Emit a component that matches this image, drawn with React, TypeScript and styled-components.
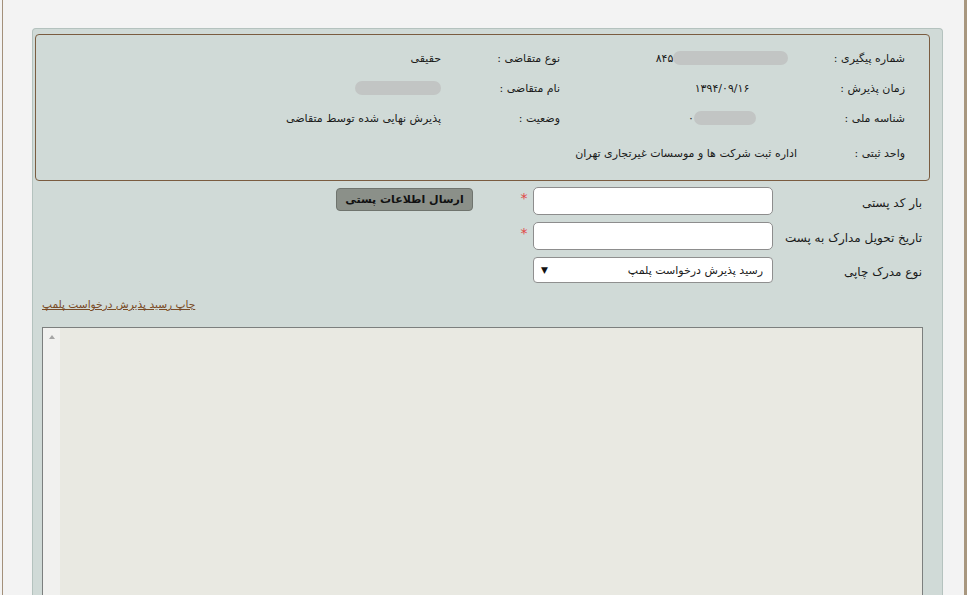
import * as React from "react"
import styled, { createGlobalStyle } from "styled-components"

const GlobalStyle = createGlobalStyle`
  html, body {
    margin: 0;
    padding: 0;
    height: 100%;
    overflow: hidden;
    background: #f3f3f3;
  }
  body {
    font-family: "DejaVu Sans", "Noto Sans", sans-serif;
    color: #1a1a1a;
  }
`

const Page = styled.div`
  box-sizing: border-box;
  height: 100vh;
  margin-left: 2px;
  border-left: 1px solid #a3907a;
  border-right: 3px solid #a8977f;
  padding: 28px 21px 0 29px;
  display: flex;
  flex-direction: column;
`

const Panel = styled.div`
  flex: 1;
  display: flex;
  flex-direction: column;
  direction: rtl;
  background: #d0dad7;
  border: 1px solid #b4c2be;
  border-bottom: none;
  border-radius: 4px 4px 0 0;
  padding: 5px 12px 0 2px;
  min-height: 0;
`

const InfoBox = styled.div`
  box-sizing: border-box;
  height: 147px;
  border: 1px solid #7a5c40;
  border-radius: 4px;
  padding: 8px 24px 0 0;
  display: grid;
  grid-template-columns: 108px 150px 87px 119px 1fr;
  grid-template-rows: 30px 30px 30px 40px;
`

const InfoLabel = styled.div`
  display: flex;
  align-items: center;
  justify-content: flex-start;
  font-size: 11px;
  white-space: nowrap;
`

const InfoValue = styled.div<{ $center?: boolean; $wide?: boolean }>`
  display: flex;
  align-items: center;
  justify-content: ${p => (p.$center ? "center" : "flex-start")};
  font-size: 11px;
  white-space: nowrap;
  ${p => (p.$wide ? "grid-column: 2 / -1;" : "")}
`

const Ltr = styled.span`
  display: inline-flex;
  align-items: center;
  direction: ltr;
`

const Blur = styled.span<{ $w: number }>`
  display: inline-block;
  width: ${p => p.$w}px;
  height: 14px;
  border-radius: 7px;
  background: #c2c5c4;
  filter: blur(0.6px);
`

const FormGrid = styled.div`
  margin-top: 6px;
  padding-right: 8px;
  display: grid;
  grid-template-columns: 149px 240px 18px 42px 137px 1fr;
  grid-template-rows: 28px 28px 26px;
  row-gap: 7px;
`

const FieldLabel = styled.label`
  grid-column: 1;
  display: flex;
  align-items: center;
  padding-top: 3px;
  font-size: 12px;
  white-space: nowrap;
`

const TextInput = styled.input`
  grid-column: 2;
  box-sizing: border-box;
  height: 28px;
  width: 100%;
  margin: 0;
  border: 1px solid #8d8d8d;
  border-radius: 5px;
  background: #fff;
`

const Star = styled.span`
  grid-column: 3;
  color: #e04545;
  font-size: 14px;
  line-height: 14px;
  margin-top: 4px;
  text-align: center;
`

const SendButton = styled.button`
  grid-column: 5;
  grid-row: 1;
  align-self: start;
  margin-top: 1px;
  height: 23px;
  padding: 0;
  background: #8b9089;
  border: 1px solid #6f746e;
  border-radius: 4px;
  color: #111;
  font-family: inherit;
  font-weight: bold;
  font-size: 11px;
`

const SelectBox = styled.div`
  grid-column: 2;
  box-sizing: border-box;
  display: flex;
  align-items: center;
  justify-content: space-between;
  padding: 0 9px 0 7px;
  border: 1px solid #8f8f8f;
  border-radius: 4px;
  background: #fff;
  font-size: 11px;
`

const Caret = styled.span`
  font-size: 9px;
  color: #111;
`

const LinkRow = styled.div`
  display: flex;
  justify-content: flex-end;
  padding-left: 7px;
  margin-top: 13px;
`

const PrintLink = styled.a`
  font-size: 10.6px;
  line-height: 16px;
  color: #7a4b26;
  text-decoration: underline;
`

const TextArea = styled.div`
  flex: 1;
  margin: 15px 7px 0 7px;
  display: flex;
  direction: ltr;
  border: 1px solid #7c7f7e;
  border-bottom: none;
  background: #e9e9e2;
`

const ScrollTrack = styled.div`
  width: 17px;
  background: #f1f1ef;
  display: flex;
  justify-content: center;
  padding-top: 7px;
`

const UpArrow = styled.span`
  width: 0;
  height: 0;
  border-left: 3.5px solid transparent;
  border-right: 3.5px solid transparent;
  border-bottom: 4px solid #a5a5a5;
`

const App = () => (
  <>
    <GlobalStyle />
    <Page>
      <Panel>
        <InfoBox>
          <InfoLabel>شماره پیگیری :</InfoLabel>
          <InfoValue $center>
            <Ltr>۸۴۵<Blur $w={115} /></Ltr>
          </InfoValue>
          <span />
          <InfoLabel>نوع متقاضی :</InfoLabel>
          <InfoValue>حقیقی</InfoValue>

          <InfoLabel>زمان پذیرش :</InfoLabel>
          <InfoValue $center>۱۳۹۴/۰۹/۱۶</InfoValue>
          <span />
          <InfoLabel>نام متقاضی :</InfoLabel>
          <InfoValue><Blur $w={86} /></InfoValue>

          <InfoLabel>شناسه ملی :</InfoLabel>
          <InfoValue $center>
            <Ltr>۰<Blur $w={62} /></Ltr>
          </InfoValue>
          <span />
          <InfoLabel>وضعیت :</InfoLabel>
          <InfoValue>پذیرش نهایی شده توسط متقاضی</InfoValue>

          <InfoLabel>واحد ثبتی :</InfoLabel>
          <InfoValue $wide>اداره ثبت شرکت ها و موسسات غیرتجاری تهران</InfoValue>
        </InfoBox>

        <FormGrid>
          <FieldLabel>بار کد پستی</FieldLabel>
          <TextInput />
          <Star>*</Star>
          <SendButton>ارسال اطلاعات پستی</SendButton>

          <FieldLabel>تاریخ تحویل مدارک به پست</FieldLabel>
          <TextInput />
          <Star>*</Star>

          <FieldLabel>نوع مدرک چاپی</FieldLabel>
          <SelectBox>
            <span>رسید پذیرش درخواست پلمپ</span>
            <Caret>▼</Caret>
          </SelectBox>
        </FormGrid>

        <LinkRow>
          <PrintLink href="#">چاپ رسید پذیرش درخواست پلمپ</PrintLink>
        </LinkRow>

        <TextArea>
          <ScrollTrack>
            <UpArrow />
          </ScrollTrack>
        </TextArea>
      </Panel>
    </Page>
  </>
)

export default App
